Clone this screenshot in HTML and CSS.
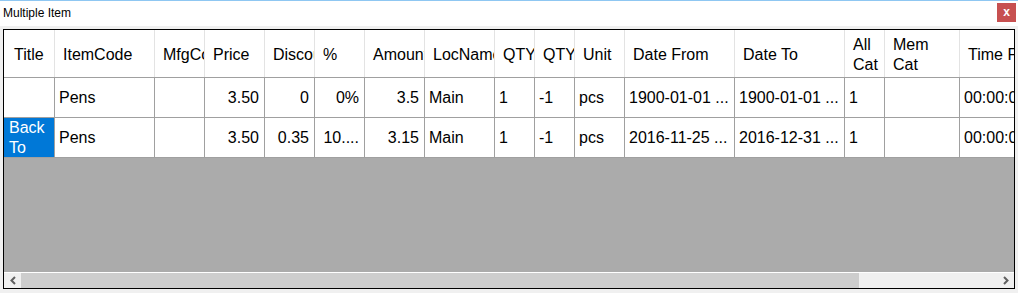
FILE: index.html
```html
<!DOCTYPE html>
<html>
<head>
<meta charset="utf-8">
<link rel="stylesheet" href="styles.css">
</head>
<body>
<div class="window">
  <div class="titlebar">
    <span class="title">Multiple Item</span>
    <span class="close">x</span>
  </div>
  <div class="grid">
    <div class="viewport">
      <div class="row header">
        <div class="hc first">Title</div>
        <div class="hc">ItemCode</div>
        <div class="hc">MfgCode</div>
        <div class="hc">Price</div>
        <div class="hc">Discount</div>
        <div class="hc">%</div>
        <div class="hc">Amount</div>
        <div class="hc">LocName</div>
        <div class="hc">QTY</div>
        <div class="hc">QTY</div>
        <div class="hc">Unit</div>
        <div class="hc">Date From</div>
        <div class="hc">Date To</div>
        <div class="hc">All Cat</div>
        <div class="hc">Mem Cat</div>
        <div class="hc">Time From</div>
      </div>
      <div class="row body">
        <div class="c first"></div>
        <div class="c">Pens</div>
        <div class="c"></div>
        <div class="c num">3.50</div>
        <div class="c num">0</div>
        <div class="c num">0%</div>
        <div class="c num">3.5</div>
        <div class="c">Main</div>
        <div class="c">1</div>
        <div class="c">-1</div>
        <div class="c">pcs</div>
        <div class="c">1900-01-01 ...</div>
        <div class="c">1900-01-01 ...</div>
        <div class="c">1</div>
        <div class="c"></div>
        <div class="c">00:00:00</div>
      </div>
      <div class="row body">
        <div class="c first selected">Back To</div>
        <div class="c">Pens</div>
        <div class="c"></div>
        <div class="c num">3.50</div>
        <div class="c num">0.35</div>
        <div class="c num">10....</div>
        <div class="c num">3.15</div>
        <div class="c">Main</div>
        <div class="c">1</div>
        <div class="c">-1</div>
        <div class="c">pcs</div>
        <div class="c">2016-11-25 ...</div>
        <div class="c">2016-12-31 ...</div>
        <div class="c">1</div>
        <div class="c"></div>
        <div class="c">00:00:00</div>
      </div>
    </div>
    <div class="hscroll">
      <div class="sbtn">
        <svg width="8" height="9" viewBox="0 0 8 9"><polyline points="6,1 2.5,4.5 6,8" fill="none" stroke="#606060" stroke-width="2"/></svg>
      </div>
      <div class="track">
        <div class="thumb"></div>
      </div>
      <div class="sbtn">
        <svg width="8" height="9" viewBox="0 0 8 9"><polyline points="2,1 5.5,4.5 2,8" fill="none" stroke="#606060" stroke-width="2"/></svg>
      </div>
    </div>
  </div>
</div>
</body>
</html>
```
FILE: styles.css
```css
html, body {
  margin: 0;
  padding: 0;
  width: 1018px;
  height: 293px;
  overflow: hidden;
  background: #f0f0f0;
  font-family: "Liberation Sans", Arial, sans-serif;
}

.window {
  border-top: 1px solid #8fc7f2;
  height: 292px;
  display: flex;
  flex-direction: column;
}

.titlebar {
  height: 25px;
  background: #ffffff;
  display: flex;
  justify-content: space-between;
  align-items: flex-start;
  padding-left: 3px;
}

.title {
  font-size: 12px;
  line-height: 25px;
  color: #000;
}

.close {
  margin-top: 2px;
  margin-right: 2px;
  width: 19px;
  height: 19px;
  background: #c75050;
  color: #ffffff;
  font-size: 12px;
  font-weight: bold;
  line-height: 18px;
  text-align: center;
}

.grid {
  margin: 3px 0 0 3px;
  width: 1010px;
  height: 258px;
  border: 1px solid #000;
  display: flex;
  flex-direction: column;
  overflow: hidden;
}

.viewport {
  flex: 1;
  background: #ababab;
  overflow: hidden;
  border-bottom: 1px solid #ffffff;
}

.row {
  display: grid;
  grid-template-columns: 51px 100px 50px 60px 50px 50px 60px 70px 40px 40px 50px 110px 110px 40px 75px 100px;
  width: 1056px;
  background: #ffffff;
  font-size: 16px;
  line-height: 20px;
  color: #000;
}

.header {
  height: 48px;
  border-bottom: 1px solid #a0a0a0;
  box-sizing: border-box;
}

.hc {
  display: flex;
  align-items: center;
  padding: 2px 12px 0 8px;
  border-right: 1px solid #e3e3e3;
  overflow: hidden;
}

.hc.first {
  padding-left: 10px;
}

.body {
  height: 40px;
  border-bottom: 1px solid #a0a0a0;
  box-sizing: border-box;
}

.c {
  display: flex;
  align-items: center;
  padding: 1px 5px 0 4px;
  border-right: 1px solid #a0a0a0;
  overflow: hidden;
  white-space: nowrap;
}

.c.num {
  justify-content: flex-end;
}

.c.selected {
  background: #0078d7;
  color: #ffffff;
  white-space: normal;
  padding-left: 5px;
}

.hscroll {
  height: 15px;
  display: flex;
  background: #f0f0f0;
}

.sbtn {
  width: 17px;
  display: flex;
  align-items: center;
  justify-content: center;
}

.track {
  flex: 1;
  display: flex;
}

.thumb {
  width: 838px;
  background: #cdcdcd;
}
```
